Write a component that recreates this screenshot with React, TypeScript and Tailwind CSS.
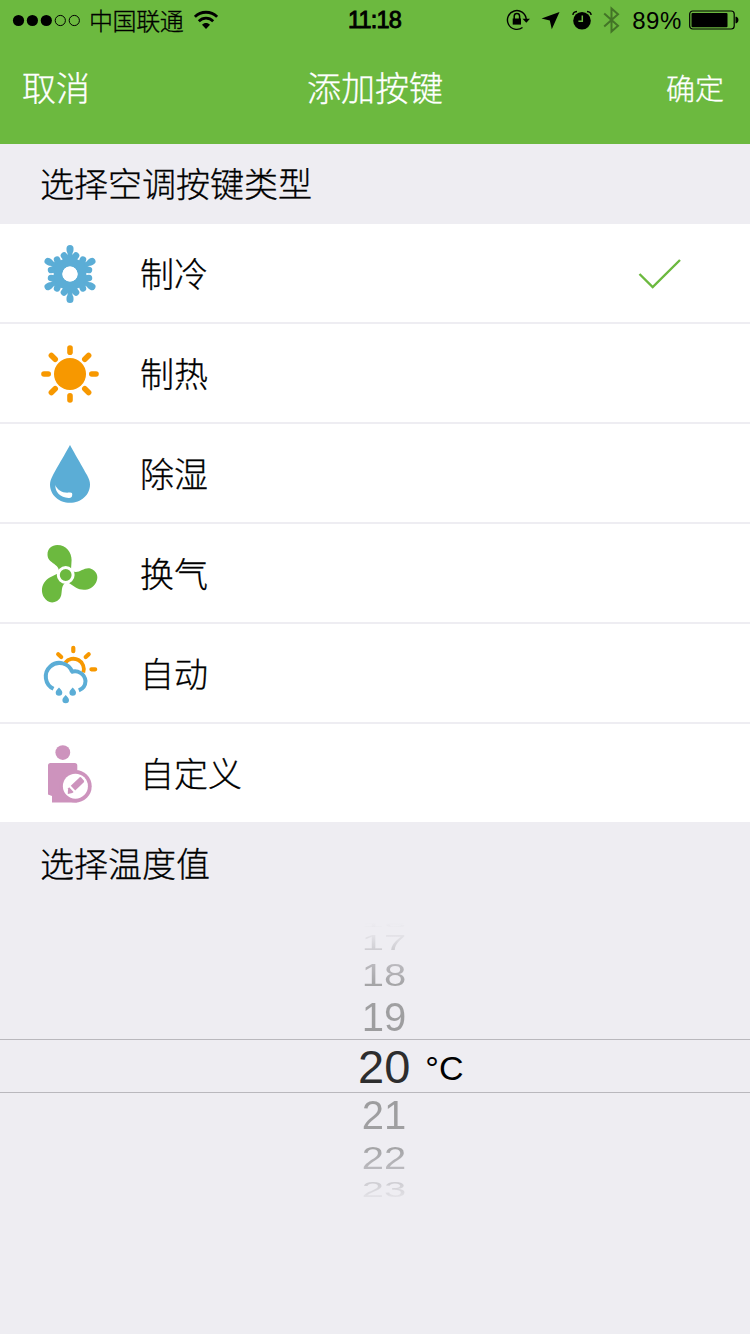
import { useState, type ReactNode } from "react";
import { clsx } from "clsx";

const BLUE = "#5badd6";
const ORANGE = "#f79800";
const GREEN = "#6cb93f";
const PINK = "#cd93bd";

function SnowIcon() {
  return (
    <g stroke={BLUE} strokeLinecap="round">
      {[0, 60, 120, 180, 240, 300].map((deg) => (
        <g key={deg} transform={`rotate(${deg} 30 30)`}>
          <path d="M30 18V5" strokeWidth="5" />
          <path d="M30 6V4.600" strokeWidth="7" />
          <path d="M30 19L24 11.600M30 19L36 11.600" strokeWidth="6.600" />
        </g>
      ))}
      <circle cx="30" cy="30" r="12" fill="#fff" strokeWidth="8.800" />
      <circle cx="30" cy="30" r="7.600" fill="#fff" stroke="none" />
    </g>
  );
}

function SunIcon() {
  return (
    <g stroke={ORANGE} strokeWidth="5.6" strokeLinecap="round">
      <circle cx="30" cy="30" r="16" fill={ORANGE} stroke="none" />
      {[0, 90, 180, 270].map((deg) => (
        <g key={deg} transform={`rotate(${deg} 30 30)`}>
          <path d="M30 4V8.2" />
          <path d="M11.4 11.4L15.2 15.2" />
        </g>
      ))}
    </g>
  );
}

function DropIcon() {
  return (
    <>
      <path
        d="M30 1C31 3 42 22 47 31C49 34.800 50 37.500 50 40.500C50 51 41 58.800 30 58.800C19 58.800 10 51 10 40.500C10 37.500 11 34.800 13 31C18 22 29 3 30 1Z"
        fill={BLUE}
      />
      <path
        d="M15.400 41C17 46 23 49.400 29 48.600C31.500 48.200 32.600 49 32.200 51C32 53.500 30.800 54.200 28.500 54C20.500 53.600 14.800 48 15.400 41Z"
        fill="#fff"
      />
    </>
  );
}

function FanIcon() {
  return (
    <g fill={GREEN}>
      {[0, 120, 240].map((deg) => (
        <path
          key={deg}
          transform={`rotate(${deg} 25.7 31)`}
          d="M19 27C18.500 19 7.500 19.500 7.500 10.500C7.500 4.500 12 1 17.200 1C26.500 1 31.600 8.500 31.600 16L31 26Z"
        />
      ))}
      <circle cx="25.7" cy="31" r="7.400" stroke="#fff" strokeWidth="3" />
    </g>
  );
}

function AutoIcon() {
  return (
    <g fill="none" strokeLinecap="round">
      <g stroke={ORANGE} strokeWidth="4.200">
        <path d="M33.300 3.800V7.200M18.200 10.200L21.200 13M48.700 10.200L45.700 13M51.400 25.300H55.200" />
        <path
          d="M25.300 18.700A10.400 10.400 0 0 1 43.300 28.500"
          strokeWidth="3.800"
          strokeLinecap="butt"
        />
      </g>
      <g stroke={BLUE} strokeWidth="4">
        <path d="M13.500 44.800A13.600 13.600 0 1 1 32.200 28" strokeLinecap="butt" />
        <path
          d="M30.800 28.200A10.600 10.600 0 0 1 45.500 37A10.400 10.400 0 0 1 38.800 46.400"
          strokeLinecap="butt"
        />
      </g>
      <g fill={BLUE}>
        <path d="M19 43.400C20.500 45.300 22.300 46.600 22.300 48.600A3.300 3.200 0 0 1 15.700 48.600C15.700 46.600 17.500 45.300 19 43.400Z" />
        <path d="M32.700 43.400C34.200 45.300 36 46.600 36 48.600A3.300 3.200 0 0 1 29.400 48.600C29.400 46.600 31.200 45.300 32.700 43.400Z" />
        <path d="M25.700 51C27.200 52.900 29 54.200 29 56A3.300 3.200 0 0 1 22.400 56C22.400 54.200 24.200 52.900 25.700 51Z" />
      </g>
    </g>
  );
}

function CustomIcon() {
  return (
    <g fill={PINK}>
      <circle cx="22.800" cy="8.600" r="7.400" />
      <path d="M10.500 19H34.800Q37.300 19 37.300 21.500V58.400H12V52L8 50.500V21.500Q8 19 10.500 19Z" />
      <circle cx="35.400" cy="42.200" r="16.300" />
      <circle cx="35.400" cy="42.200" r="12.500" fill="#fff" />
      <path d="M39.500 33.400Q40.500 32.700 41.400 33.700L43.800 36.600Q44.500 37.500 43.600 38.400L35.200 46.400L30.800 41.700Z" />
      <path d="M29.200 43.200L33.600 47.900L32.400 49Q30 49.600 27.800 50Q27.800 46.500 28.200 44.200Z" />
    </g>
  );
}

const modes: { label: string; icon: ReactNode }[] = [
  { label: "制冷", icon: <SnowIcon /> },
  { label: "制热", icon: <SunIcon /> },
  { label: "除湿", icon: <DropIcon /> },
  { label: "换气", icon: <FanIcon /> },
  { label: "自动", icon: <AutoIcon /> },
  { label: "自定义", icon: <CustomIcon /> },
];

// Rows of the wheel, squeezed and faded away from the centre
const above = [
  { value: 16, row: "h-[10px]", text: "scale-y-[0.15] from-[#eeedf2] to-[#e8e7ec]" },
  { value: 17, row: "h-[25px]", text: "scale-y-[0.53] from-[#e6e5ea] to-[#cbcacf]" },
  { value: 18, row: "h-[40px]", text: "scale-y-[0.8] from-[#bebdc2] to-[#a0a0a2]" },
  { value: 19, row: "h-[44px]", text: "from-[#a0a0a2] to-[#9c9c9e]" },
];

const below = [
  { value: 21, row: "h-[44px]", text: "from-[#9c9c9e] to-[#a0a0a2]" },
  { value: 22, row: "h-[41px]", text: "scale-y-[0.8] from-[#a0a0a2] to-[#bebdc2]" },
  { value: 23, row: "h-[24px]", text: "scale-y-[0.53] from-[#cbcacf] to-[#e6e5ea]" },
];

function WheelRow({ value, row, text }: { value: number; row: string; text: string }) {
  return (
    <div className={clsx("flex items-center justify-center pl-[18px]", row)}>
      <span
        className={clsx(
          "bg-linear-to-b bg-clip-text text-[40px] leading-[36px] text-transparent",
          text,
        )}
      >
        {value}
      </span>
    </div>
  );
}

function StatusBar() {
  return (
    <div className="flex h-10 items-center text-black">
      <div className="flex flex-1 items-center pl-3">
        <svg width="69" height="14" viewBox="0 0 69 14">
          {[6.5, 20.4, 34.3].map((x) => (
            <circle key={x} cx={x} cy="7.500" r="5.600" />
          ))}
          {[48.3, 62.3].map((x) => (
            <circle key={x} cx={x} cy="7.500" r="5.100" fill="none" stroke="#000" />
          ))}
        </svg>
        <span className="ml-2 pt-1 text-[24px] leading-9 font-light tracking-[-0.4px] [-webkit-text-stroke:0.3px]">
          中国联通
        </span>
        <svg className="ml-[11px]" width="24" height="20" viewBox="0 0 24 20" fill="none" stroke="#000">
          <path d="M0.900 6.800C7 0.700 17 0.700 23.100 6.800" strokeWidth="2.800" />
          <path d="M4.800 11.200C9 7.200 15 7.200 19.200 11.200" strokeWidth="2.800" />
          <path d="M8 14.700C10.300 12.500 13.700 12.500 16 14.700L12 19Z" fill="#000" stroke="none" />
        </svg>
      </div>
      <span className="pt-0.5 pr-0.5 text-[23.500px] leading-none tracking-[-0.8px] [-webkit-text-stroke:0.9px]">
        11:18
      </span>
      <div className="flex flex-1 items-center justify-end pr-[11px]">
        <svg width="24" height="22" viewBox="0 0 24 22" fill="none" stroke="#000">
          <path d="M20.200 10A9.400 9.400 0 1 0 16.500 18.500" strokeWidth="1.400" />
          <path d="M16.500 9.800H24L20.300 13.800Z" fill="#000" stroke="none" />
          <path d="M6.700 9.500H15V15.600H6.700Z" fill="#000" stroke="none" />
          <path d="M8.200 10V7.300A2.700 2.700 0 0 1 13.600 7.300V10" strokeWidth="1.500" />
        </svg>
        <svg className="ml-[11px]" width="19" height="19" viewBox="0 0 19 19">
          <path d="M0.500 7.600L18.500 1L10.800 18.200L8.800 9.400Z" />
        </svg>
        <svg className="ml-[12px]" width="20" height="20" viewBox="0 0 20 20" fill="none">
          <circle cx="10" cy="10.800" r="8.800" fill="#000" />
          <path d="M10.300 5.500V11.300H6.400" stroke={GREEN} strokeWidth="1.500" />
          <path d="M0.900 5C1 3.200 2.800 1.700 5 1.500M19.100 5C19 3.200 17.200 1.700 15 1.500" stroke="#000" strokeWidth="1.400" />
        </svg>
        <svg className="ml-[11px]" width="17" height="28" viewBox="0 0 17 28" fill="none" stroke="#437427" strokeWidth="2">
          <path d="M1.200 7.500L15 19.800L8.500 25.600V2.400L15 8.200L1.200 20.500" />
        </svg>
        <span className="ml-3 pt-0.5 text-[24px] leading-none tracking-[0.6px]">89%</span>
        <svg className="ml-[7px]" width="50" height="20" viewBox="0 0 50 20">
          <rect x="0.700" y="1" width="44.500" height="18" rx="3" fill="none" stroke="#000" strokeWidth="1.200" />
          <rect x="2.500" y="2.900" width="36" height="14.400" rx="1" />
          <path d="M46.500 6.800H47.500Q49.500 7.500 49.500 10Q49.500 12.500 47.500 13.200H46.500Z" />
        </svg>
      </div>
    </div>
  );
}

export default function App() {
  const [selected, setSelected] = useState(0);

  return (
    <div className="flex h-[1334px] w-[750px] flex-col overflow-hidden bg-[#eeedf2] font-['Liberation_Sans','Noto_Sans_CJK_SC',sans-serif] text-black">
      <header className="h-36 bg-[#6cb93f]">
        <StatusBar />
        <nav className="flex h-24 items-center justify-between px-[22px] pt-[3px] text-[34px] font-light text-white [-webkit-text-stroke:0.3px]">
          <button className="flex-1 text-left">取消</button>
          <h1>添加按键</h1>
          <button className="flex-1 pt-0.5 text-right text-[29px]">
            <span className="mr-1">确定</span>
          </button>
        </nav>
      </header>

      <h2 className="flex h-20 items-center px-10 pt-[3px] text-[34px] font-light [-webkit-text-stroke:0.3px]">
        选择空调按键类型
      </h2>

      <ul className="flex flex-col gap-0.5">
        {modes.map((mode, i) => (
          <li
            key={mode.label}
            onClick={() => setSelected(i)}
            className="flex h-[98px] items-center bg-white pt-0.5 pr-[68px] pl-10"
          >
            <svg width="60" height="60" viewBox="0 0 60 60" fill="none">
              {mode.icon}
            </svg>
            <span className="ml-10 flex-1 pt-0.5 text-[34px] leading-[50px] font-light [-webkit-text-stroke:0.3px]">
              {mode.label}
            </span>
            {selected === i && (
              <svg width="44" height="30" viewBox="0 0 44 30" fill="none">
                <path d="M1.500 15L14.700 28L42 1" stroke={GREEN} strokeWidth="2.400" />
              </svg>
            )}
          </li>
        ))}
      </ul>

      <h2 className="flex h-[84px] items-center px-10 pt-[3px] text-[34px] font-light [-webkit-text-stroke:0.3px]">
        选择温度值
      </h2>

      <div className="flex flex-col pt-[14px]">
        {above.map((item) => (
          <WheelRow key={item.value} {...item} />
        ))}
        <div className="flex h-[54px] items-center border-y border-[#b9b8bd] pl-[358px]">
          <span className="text-[47px] leading-none text-[#2d2d2e]">20</span>
          <span className="ml-[15px] pt-1 text-[34px] leading-none">°C</span>
        </div>
        {below.map((item) => (
          <WheelRow key={item.value} {...item} />
        ))}
      </div>
    </div>
  );
}
